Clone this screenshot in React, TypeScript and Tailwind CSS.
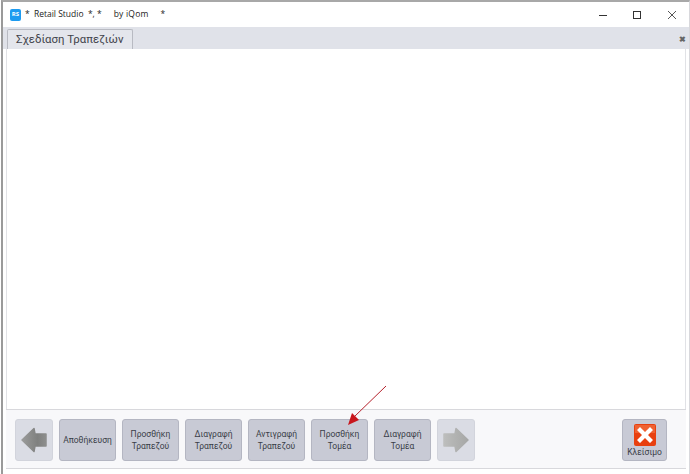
const font = { fontFamily: '"Open Sans", "Noto Sans", sans-serif' };
const labelFont = { fontFamily: 'Roboto, "Noto Sans", sans-serif' };

function Arrow({ right = false }: { right?: boolean }) {
  const id = right ? "ar" : "al";
  return (
    <svg width="28" height="28" viewBox="0 0 28 28" className={right ? "rotate-180" : ""}>
      <defs>
        <linearGradient id={id} x1="0" x2="1" y1="0" y2="0">
          <stop offset="0" stopColor={right ? "#a6a7a6" : "#9a9b9a"} />
          <stop offset="0.65" stopColor={right ? "#b4b5b4" : "#7f807f"} />
          <stop offset="1" stopColor={right ? "#bdbebd" : "#8d8e8d"} />
        </linearGradient>
      </defs>
      <path d="M2 14 L14 2.5 L15 8 L26 8 L26 20 L15 20 L14 25.5 Z" fill={`url(#${id})`} stroke={`url(#${id})`} strokeWidth="1.5" strokeLinejoin="round" />
    </svg>
  );
}

function Btn({ label }: { label: string[] }) {
  return (
    <div style={labelFont} className="w-[57px] h-[42px] shrink-0 rounded-[3px] bg-[#c8cad5] border border-[#b4b6c2] flex flex-col items-center justify-center text-[8.5px] leading-[12px] text-[#3a3e48]">
      {label.map((l) => (
        <span key={l}>{l}</span>
      ))}
    </div>
  );
}

function NavBtn({ right = false }: { right?: boolean }) {
  return (
    <div className="w-[38px] h-[42px] shrink-0 rounded-[3px] bg-[#dadce4] border border-[#d2d4dc] flex items-center justify-center">
      <Arrow right={right} />
    </div>
  );
}

export default function App() {
  return (
    <div style={font} className="relative w-[690px] h-[474px] bg-white overflow-hidden pl-[1px]">
      <div className="h-full border-t-[2px] border-t-[#a8a8a8] border-l-[2px] border-l-[#9a9a9a] border-r border-r-[#d8d8dc]">
        <div className="h-[25px] flex items-center bg-white">
          <div className="ml-[7px] w-[11px] h-[12px] rounded-[2px] bg-[#1d9bf0] text-white text-[6px] font-bold flex items-center justify-center">RS</div>
          <span className="ml-[4px] text-[8.5px] text-[#222] whitespace-pre">* </span>
          <span className="ml-[2px] text-[8.5px] text-[#222] whitespace-pre">Retail Studio  *, *</span>
          <span className="ml-[12px] text-[8.5px] text-[#222] whitespace-pre tracking-[0.2px]">by iQom</span>
          <span className="ml-[12px] text-[8.5px] text-[#222]">*</span>
          <div className="ml-auto flex items-center">
            <svg width="8" height="8" viewBox="0 0 8 8" className="mr-[26px]"><path d="M0 4.5H8" stroke="#333" strokeWidth="1" /></svg>
            <svg width="8" height="8" viewBox="0 0 8 8" className="mr-[27px]"><rect x="0.5" y="0.5" width="7" height="7" fill="none" stroke="#333" strokeWidth="1" /></svg>
            <svg width="8" height="8" viewBox="0 0 8 8" className="mr-[13px]"><path d="M0 0L8 8M8 0L0 8" stroke="#444" strokeWidth="0.9" /></svg>
          </div>
        </div>
        <div className="h-[22px] bg-[#e0e2e9] flex items-end pl-[4px] pr-[3px]">
          <div style={labelFont} className="w-[126px] h-[20px] bg-[#e4e6ec] border border-b-0 border-[#b8bac2] rounded-t-[2px] text-[11.4px] leading-[19px] text-[#3f434a] pl-[8px] whitespace-nowrap">Σχεδίαση Τραπεζιών</div>
          <span className="ml-auto mb-[6px] text-[8px] font-bold leading-none text-[#666]">✖</span>
        </div>
        <div className="h-[360px] mx-[3px] bg-white border-x border-[#e1e2e6]" />
        <div className="h-[60px] bg-[#f8f8fa] flex items-start mx-[3px] pt-[9px] pl-[9px] pr-[19px] gap-[6px] border-y border-[#d8d8dc]">
          <NavBtn />
          <Btn label={["Αποθήκευση"]} />
          <Btn label={["Προσθήκη", "Τραπεζού"]} />
          <Btn label={["Διαγραφή", "Τραπεζού"]} />
          <Btn label={["Αντιγραφή", "Τραπεζού"]} />
          <Btn label={["Προσθήκη", "Τομέα"]} />
          <Btn label={["Διαγραφή", "Τομέα"]} />
          <NavBtn right />
          <div style={labelFont} className="ml-auto w-[45px] h-[42px] rounded-[3px] bg-[#c8cad5] border border-[#b4b6c2] flex flex-col items-center pt-[4px] text-[8.5px] leading-[12px] text-[#3a3e48]">
            <svg width="22" height="22" viewBox="0 0 22 22">
              <rect x="0" y="0" width="22" height="22" rx="2" fill="#e8400f" />
              <rect x="1" y="1" width="20" height="8" fill="#f47a4a" opacity="0.6" />
              <path d="M6 3 L11 8 L16 3 L19 6 L14 11 L19 16 L16 19 L11 14 L6 19 L3 16 L8 11 L3 6 Z" fill="#fff" />
            </svg>
            <span>Κλείσιμο</span>
          </div>
        </div>
      </div>
      <svg className="absolute left-[344px] top-[384px] pointer-events-none" width="44" height="42" viewBox="0 0 44 42">
        <path d="M42 2 L10 33" stroke="#b5202a" strokeWidth="1" />
        <path d="M4 41 L8 29 L15 36 Z" fill="#c8161d" />
      </svg>
    </div>
  );
}
